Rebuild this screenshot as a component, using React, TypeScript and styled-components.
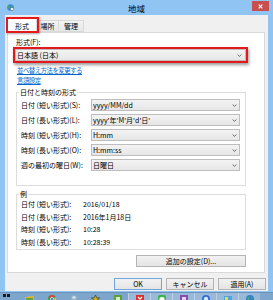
import React from 'react';
import styled, { createGlobalStyle } from 'styled-components';

const FONT = `"Noto Sans CJK JP", "Noto Sans", sans-serif`;

const Global = createGlobalStyle`
  html, body { margin: 0; padding: 0; }
  body { width: 273px; height: 300px; overflow: hidden; font-family: ${FONT}; color: #000; }
  #root { width: 273px; height: 300px; }
`;

const Screen = styled.div`
  width: 273px;
  height: 300px;
  display: flex;
  flex-direction: column;
  overflow: hidden;
`;

const Window = styled.div`
  flex: 1;
  display: flex;
  flex-direction: column;
  background: #90c5f3;
  padding-bottom: 1px;
`;

const TitleBar = styled.div`
  height: 15px;
  display: grid;
  grid-template-columns: 1fr auto 1fr;
  align-items: center;
`;

const TitleIcon = styled.svg`
  margin-left: 7px;
  margin-top: -1px;
`;

const TitleText = styled.div`
  font-size: 8.5px;
  line-height: 10px;
  color: #000;
`;

const CloseButton = styled.div`
  justify-self: end;
  align-self: start;
  margin-top: 1px;
  margin-right: 4px;
  width: 17px;
  height: 10px;
  background: #c94f4f;
  display: flex;
  align-items: center;
  justify-content: center;
`;

const Body = styled.div`
  flex: 1;
  margin: 0 5px;
  background: #f0f0f0;
  display: flex;
  flex-direction: column;
  padding: 3px 3px 1px 2px;
  font-size: 7px;
  line-height: 9px;
`;

const TabRow = styled.div`
  height: 14px;
  display: flex;
  align-items: flex-end;
  position: relative;
  z-index: 1;
`;

const Tab = styled.div<{ $active?: boolean; $w: number }>`
  width: ${p => p.$w}px;
  box-sizing: border-box;
  height: ${p => (p.$active ? 15 : 12)}px;
  margin-bottom: ${p => (p.$active ? -1 : 0)}px;
  border: 1px solid #d9d9d9;
  border-bottom: ${p => (p.$active ? 'none' : '1px solid #d9d9d9')};
  border-left: ${p => (p.$active ? '1px solid #d9d9d9' : 'none')};
  background: ${p => (p.$active ? '#ffffff' : 'linear-gradient(#f3f3f3, #e7e7e7)')};
  display: flex;
  align-items: center;
  justify-content: center;
  font-size: 7px;
`;

const TabMark = styled.div`
  position: absolute;
  left: -1px;
  top: -1px;
  width: 33px;
  height: 16px;
  box-sizing: border-box;
  border: 2px solid #e3191b;
  box-shadow: 1px 1px 2px rgba(0, 0, 0, 0.35);
  pointer-events: none;
`;

const Panel = styled.div`
  height: 241px;
  box-sizing: border-box;
  background: #ffffff;
  border: 1px solid #d9d9d9;
  display: flex;
  flex-direction: column;
  padding: 5px 18px 0 7px;
`;

const FieldLabel = styled.div`
  padding-left: 1px;
  height: 9px;
`;

const Highlight = styled.div`
  border: 2px solid #e3191b;
  margin: 0 -2px;
  box-shadow: 1px 2px 3px rgba(0, 0, 0, 0.4);
`;

const Combo = styled.div<{ $right: number }>`
  height: 12px;
  box-sizing: border-box;
  border: 1px solid #bdbdbd;
  background: linear-gradient(#f3f3f3, #e6e6e6);
  display: flex;
  align-items: center;
  justify-content: space-between;
  padding: 0 ${p => p.$right}px 0 1px;
  white-space: nowrap;
`;

const Link = styled.a`
  display: block;
  margin-top: 3px;
  padding-left: 2px;
  height: 9px;
  color: #0066cc;
  text-decoration: underline;
  font-size: 6.5px;
  letter-spacing: -0.6px;
  align-self: flex-start;
`;

const LinkNext = styled(Link)`
  margin-top: 1px;
`;

const Group = styled.fieldset<{ $top: number; $pb: number; $pt: number }>`
  margin: ${p => p.$top}px 0 0 1px;
  border: 1px solid #dcdcdc;
  padding: ${p => p.$pt}px 5px ${p => p.$pb}px 4px;
  min-width: 0;
`;

const Legend = styled.legend`
  padding: 0 1px;
  margin-left: -2px;
  line-height: 8px;
  font-size: 7px;
`;

const FormatList = styled.div`
  display: flex;
  flex-direction: column;
  gap: 3px;
`;

const FormatRow = styled.div`
  display: grid;
  grid-template-columns: 70px 1fr;
  align-items: center;
  white-space: nowrap;
`;

const ExampleRow = styled.div`
  display: grid;
  grid-template-columns: 62px 1fr;
  line-height: 12.6px;
  white-space: nowrap;
`;

const PushButton = styled.div<{ $w: number; $default?: boolean }>`
  width: ${p => p.$w}px;
  height: 12px;
  box-sizing: border-box;
  border: 1px solid ${p => (p.$default ? '#6fa6dc' : '#b4b4b4')};
  background: linear-gradient(#f2f2f2, #e4e4e4);
  display: flex;
  align-items: center;
  justify-content: center;
  white-space: nowrap;
`;

const MoreRow = styled.div`
  display: flex;
  justify-content: flex-end;
  margin-top: 5px;
`;

const ButtonRow = styled.div`
  margin-top: 5px;
  margin-right: -1px;
  display: flex;
  justify-content: flex-end;
  gap: 4px;
`;

const Taskbar = styled.div`
  height: 8px;
  background: #7ea6cd;
  border-top: 1px solid #6a93bd;
  box-sizing: border-box;
  display: flex;
  align-items: flex-start;
  overflow: hidden;
`;

const StartSlot = styled.div`
  width: 18px;
  display: flex;
  gap: 1px;
  padding: 1px 0 0 3px;
  box-sizing: border-box;
`;

const Dot = styled.div`
  width: 3px;
  height: 3px;
  background: #1a1a1a;
`;

const Slot = styled.div<{ $running?: boolean }>`
  width: 22px;
  height: 8px;
  box-sizing: border-box;
  display: flex;
  justify-content: center;
  padding-top: 2px;
  background: ${p => (p.$running ? 'rgba(255,255,255,0.22)' : 'transparent')};
  border-left: 1px solid ${p => (p.$running ? 'rgba(255,255,255,0.35)' : 'transparent')};
`;

const Chevron = () => (
  <svg width="5" height="3" viewBox="0 0 5 3">
    <path d="M0.6 0.5 L2.5 2.4 L4.4 0.5" stroke="#5a5a5a" strokeWidth="0.9" fill="none" />
  </svg>
);

type IconKind = 'folder' | 'chrome' | 'person' | 'star' | 'green' | 'red' | 'line' | 'purple' | 'bluec' | 'lblue' | 'globe';

const TaskIcon = ({ kind }: { kind: IconKind }) => {
  switch (kind) {
    case 'folder':
      return (
        <svg width="9" height="8" viewBox="0 0 9 8">
          <path d="M0 2 H3 L4 1 H9 V8 H0 Z" fill="#d9b23c" />
          <rect x="1" y="3" width="7" height="5" fill="#6aa33a" />
        </svg>
      );
    case 'chrome':
      return (
        <svg width="8" height="8" viewBox="0 0 8 8">
          <circle cx="4" cy="4" r="4" fill="#3ba34a" />
          <path d="M4 0 A4 4 0 0 1 7.5 2 H4 Z M4 0 A4 4 0 0 0 0.5 2 L2 4.5 Z" fill="#dd4337" />
          <path d="M7.5 2 A4 4 0 0 1 4 8 L5.7 4.8 Z" fill="#f2c023" />
          <circle cx="4" cy="4" r="1.6" fill="#3a7fe0" stroke="#fff" strokeWidth="0.6" />
        </svg>
      );
    case 'person':
      return (
        <svg width="8" height="8" viewBox="0 0 8 8">
          <rect x="1.5" y="0.5" width="5" height="7.5" rx="1" fill="#9fb3c6" />
          <rect x="2.5" y="1.5" width="3" height="2" fill="#dfe8f0" />
        </svg>
      );
    case 'star':
      return (
        <svg width="9" height="8" viewBox="0 0 9 8">
          <polygon points="4.5,0 5.6,2.8 8.6,2.9 6.2,4.8 7.1,8 4.5,6.1 1.9,8 2.8,4.8 0.4,2.9 3.4,2.8" fill="#d7b316" stroke="#2a2a10" strokeWidth="0.6" />
        </svg>
      );
    case 'green':
      return (
        <svg width="8" height="8" viewBox="0 0 8 8">
          <rect x="0" y="0" width="8" height="8" fill="#5e9f3e" />
          <rect x="2" y="2" width="4" height="6" fill="#d8ecc8" />
        </svg>
      );
    case 'red':
      return (
        <svg width="8" height="8" viewBox="0 0 8 8">
          <rect x="0" y="0" width="8" height="8" fill="#d9302c" />
          <path d="M2 2 L6 6 M6 2 L2 6" stroke="#fff" strokeWidth="1.2" />
        </svg>
      );
    case 'line':
      return (
        <svg width="8" height="8" viewBox="0 0 8 8">
          <rect x="0" y="0" width="8" height="8" rx="1.5" fill="#3bb54a" />
          <ellipse cx="4" cy="4" rx="2.6" ry="2" fill="#fff" />
        </svg>
      );
    case 'purple':
      return (
        <svg width="8" height="8" viewBox="0 0 8 8">
          <rect x="0" y="0" width="8" height="8" fill="#8a4bb0" />
          <rect x="2" y="2" width="4" height="4" fill="#e6d4ef" />
        </svg>
      );
    case 'bluec':
      return (
        <svg width="8" height="8" viewBox="0 0 8 8">
          <circle cx="4" cy="4" r="4" fill="#2d6fd6" />
          <circle cx="4" cy="4" r="2.2" fill="#dce9fa" />
        </svg>
      );
    case 'lblue':
      return (
        <svg width="8" height="8" viewBox="0 0 8 8">
          <rect x="0" y="1" width="8" height="7" fill="#49a6e0" />
          <rect x="1" y="2" width="3" height="3" fill="#f4d34a" />
        </svg>
      );
    case 'globe':
    default:
      return (
        <svg width="8" height="8" viewBox="0 0 8 8">
          <circle cx="4" cy="4" r="4" fill="#2f7fd0" />
          <path d="M2 1.5 Q4 2.5 3.5 4.5 Q2 5 1 3.5 Z M5 1 Q7 2 6.5 4 L5.5 3.5 Z" fill="#57b04a" />
        </svg>
      );
  }
};

const taskItems: { kind: IconKind; running?: boolean }[] = [
  { kind: 'folder' },
  { kind: 'chrome' },
  { kind: 'person' },
  { kind: 'star' },
  { kind: 'green' },
  { kind: 'red', running: true },
  { kind: 'line', running: true },
  { kind: 'purple', running: true },
  { kind: 'bluec', running: true },
  { kind: 'lblue', running: true },
  { kind: 'globe', running: true },
];

const formats = [
  { label: '日付 (短い形式)(S):', value: 'yyyy/MM/dd' },
  { label: '日付 (長い形式)(L):', value: "yyyy'年'M'月'd'日'" },
  { label: '時刻 (短い形式)(H):', value: 'H:mm' },
  { label: '時刻 (長い形式)(O):', value: 'H:mm:ss' },
  { label: '週の最初の曜日(W):', value: '日曜日' },
];

const examples = [
  { label: '日付 (短い形式):', value: '2016/01/18' },
  { label: '日付 (長い形式):', value: '2016年1月18日' },
  { label: '時刻 (短い形式):', value: '10:28' },
  { label: '時刻 (長い形式):', value: '10:28:39' },
];

export default function App() {
  return (
    <>
      <Global />
      <Screen>
        <Window>
          <TitleBar>
            <TitleIcon width="7" height="7" viewBox="0 0 7 7">
              <circle cx="3.5" cy="3.5" r="3.3" fill="#3d8ad6" />
              <path d="M1.2 1.8 Q3 2.2 2.6 4 Q1.4 4.3 0.6 3.2 Z M4 1 Q6 1.6 5.8 3.3 L4.5 3 Z" fill="#4fae3e" />
              <circle cx="5" cy="5" r="1.6" fill="#ffffff" stroke="#555" strokeWidth="0.5" />
            </TitleIcon>
            <TitleText>地域</TitleText>
            <CloseButton>
              <svg width="5" height="5" viewBox="0 0 5 5">
                <path d="M0.7 0.7 L4.3 4.3 M4.3 0.7 L0.7 4.3" stroke="#ffffff" strokeWidth="1.1" />
              </svg>
            </CloseButton>
          </TitleBar>
          <Body>
            <TabRow>
              <Tab $active $w={30}>形式</Tab>
              <Tab $w={22}>場所</Tab>
              <Tab $w={25}>管理</Tab>
              <TabMark />
            </TabRow>
            <Panel>
              <FieldLabel>形式(F):</FieldLabel>
              <Highlight>
                <Combo $right={3}>
                  <span>日本語 (日本)</span>
                  <Chevron />
                </Combo>
              </Highlight>
              <Link>並べ替え方法を変更する</Link>
              <LinkNext>言語設定</LinkNext>
              <Group $top={3} $pt={3} $pb={14}>
                <Legend>日付と時刻の形式</Legend>
                <FormatList>
                  {formats.map(f => (
                    <FormatRow key={f.label}>
                      <span>{f.label}</span>
                      <Combo $right={2}>
                        <span>{f.value}</span>
                        <Chevron />
                      </Combo>
                    </FormatRow>
                  ))}
                </FormatList>
              </Group>
              <Group $top={4} $pt={0} $pb={1}>
                <Legend>例</Legend>
                {examples.map(e => (
                  <ExampleRow key={e.label}>
                    <span>{e.label}</span>
                    <span>{e.value}</span>
                  </ExampleRow>
                ))}
              </Group>
              <MoreRow>
                <PushButton $w={110}>追加の設定(D)...</PushButton>
              </MoreRow>
            </Panel>
            <ButtonRow>
              <PushButton $w={48} $default>OK</PushButton>
              <PushButton $w={48}>キャンセル</PushButton>
              <PushButton $w={48}>適用(A)</PushButton>
            </ButtonRow>
          </Body>
        </Window>
        <Taskbar>
          <StartSlot>
            <Dot />
            <Dot />
          </StartSlot>
          {taskItems.map((t, i) => (
            <Slot key={i} $running={t.running}>
              <TaskIcon kind={t.kind} />
            </Slot>
          ))}
        </Taskbar>
      </Screen>
    </>
  );
}
